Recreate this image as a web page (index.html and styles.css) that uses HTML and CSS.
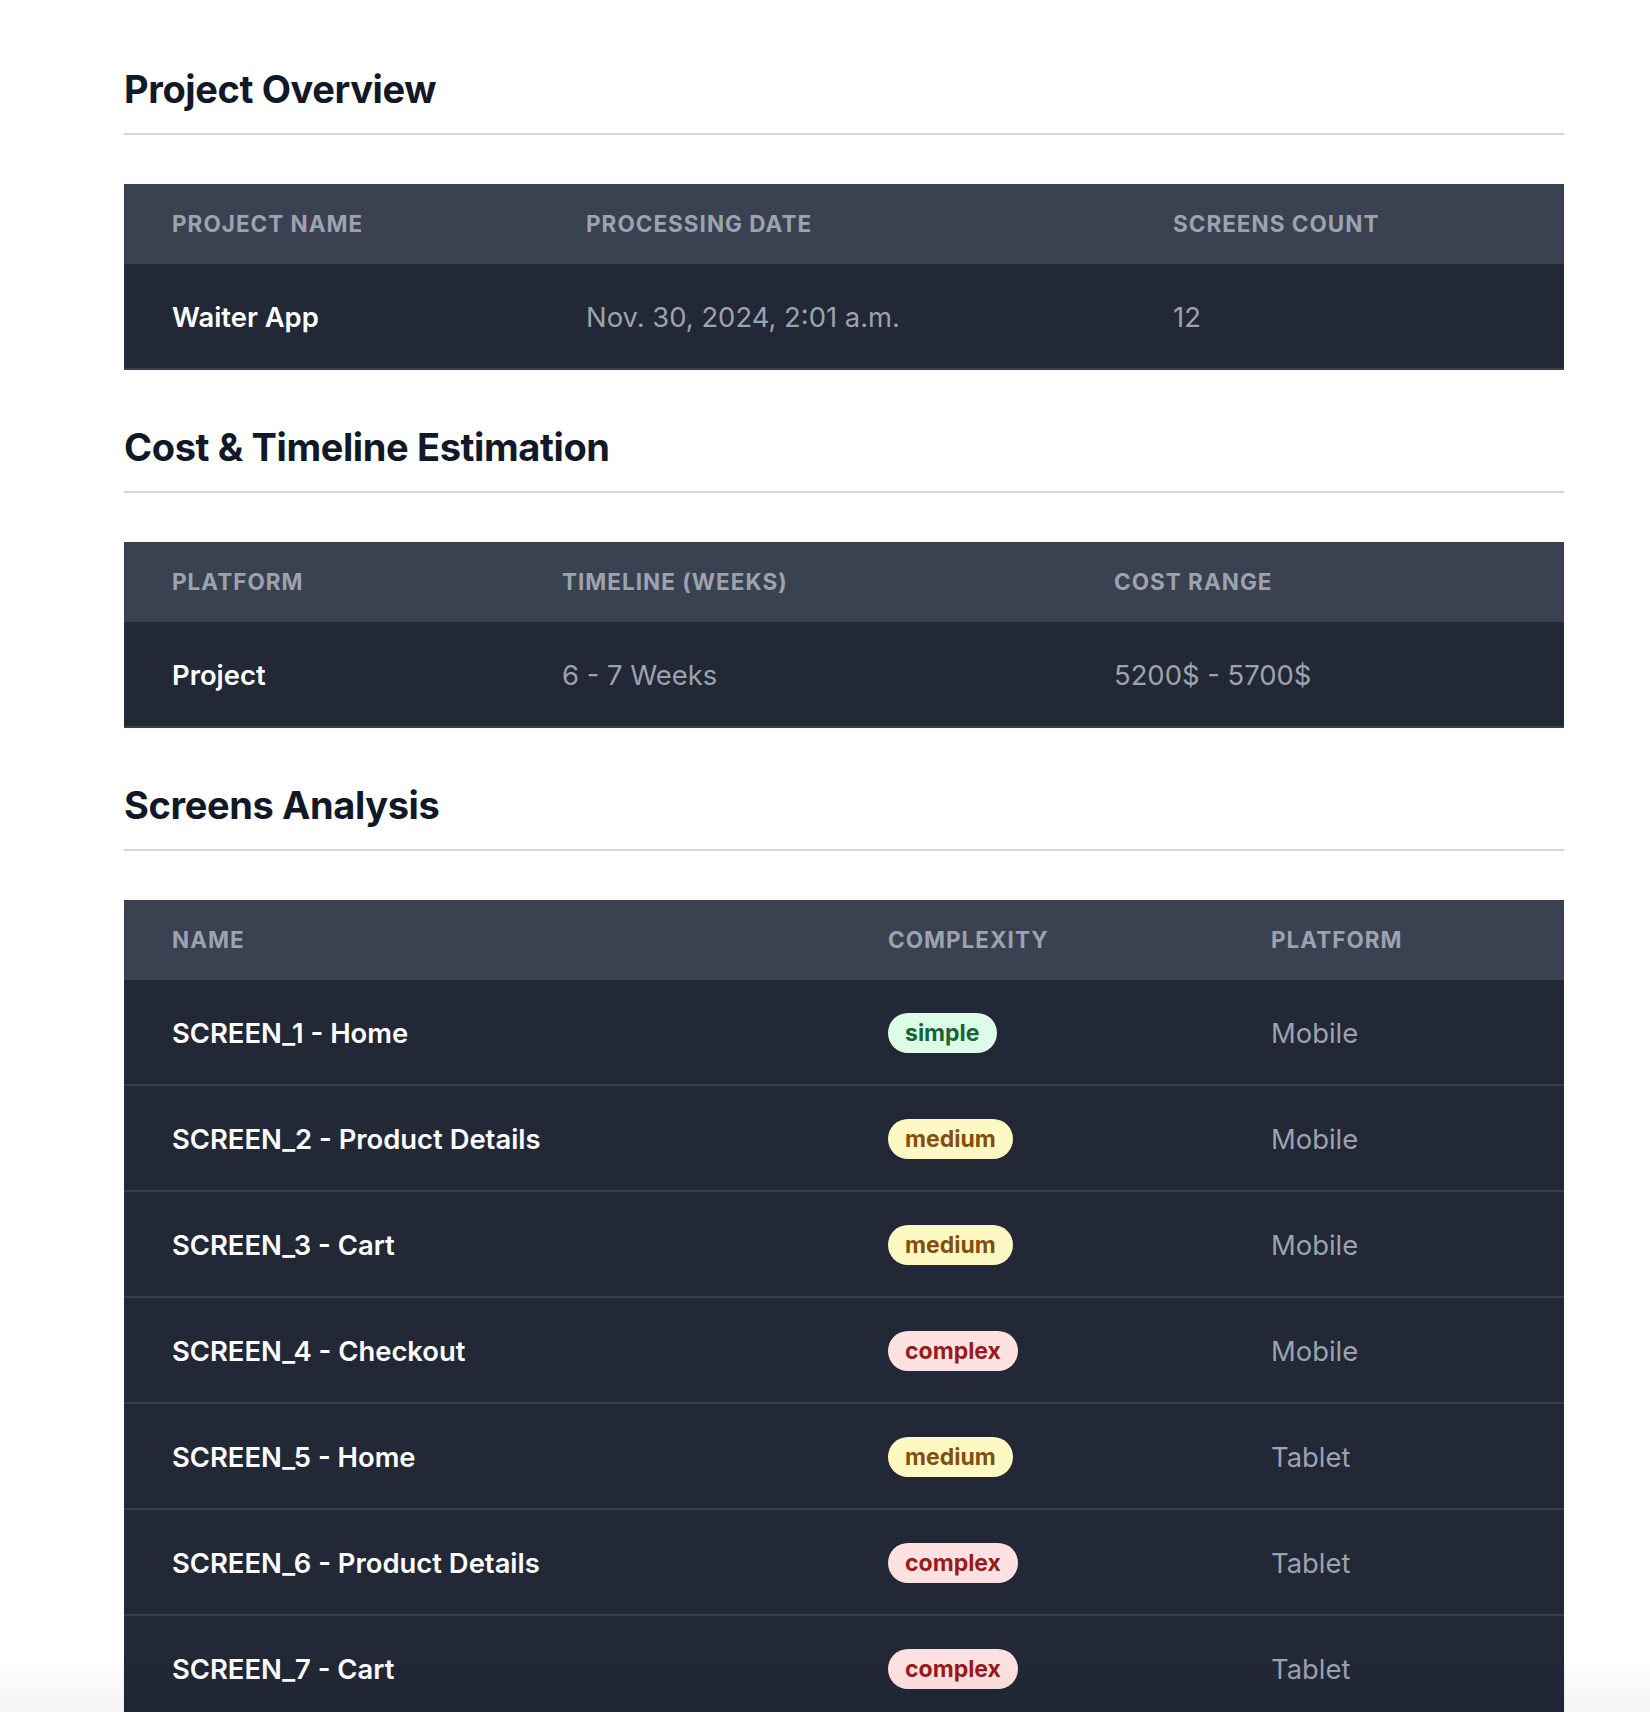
FILE: index.html
```html
<!DOCTYPE html>
<html lang="en">
<head>
<meta charset="utf-8">
<title>Project Report</title>
<link rel="stylesheet" href="styles.css">
</head>
<body>
<main class="page">
  <section class="section">
    <h2 class="section-title">Project Overview</h2>
    <table class="data-table t-overview">
      <colgroup><col class="c1"><col class="c2"><col class="c3"></colgroup>
      <thead><tr><th>Project Name</th><th>Processing Date</th><th>Screens Count</th></tr></thead>
      <tbody><tr><td class="primary">Waiter App</td><td>Nov. 30, 2024, 2:01 a.m.</td><td>12</td></tr></tbody>
    </table>
  </section>

  <section class="section">
    <h2 class="section-title">Cost &amp; Timeline Estimation</h2>
    <table class="data-table t-cost">
      <colgroup><col class="c1"><col class="c2"><col class="c3"></colgroup>
      <thead><tr><th>Platform</th><th>Timeline (Weeks)</th><th>Cost Range</th></tr></thead>
      <tbody><tr><td class="primary">Project</td><td>6 - 7 Weeks</td><td>5200$ - 5700$</td></tr></tbody>
    </table>
  </section>

  <section class="section">
    <h2 class="section-title">Screens Analysis</h2>
    <table class="data-table t-screens">
      <colgroup><col class="c1"><col class="c2"><col class="c3"></colgroup>
      <thead><tr><th>Name</th><th>Complexity</th><th>Platform</th></tr></thead>
      <tbody>
        <tr><td class="primary">SCREEN_1 - Home</td><td><span class="badge simple">simple</span></td><td>Mobile</td></tr>
        <tr><td class="primary">SCREEN_2 - Product Details</td><td><span class="badge medium">medium</span></td><td>Mobile</td></tr>
        <tr><td class="primary">SCREEN_3 - Cart</td><td><span class="badge medium">medium</span></td><td>Mobile</td></tr>
        <tr><td class="primary">SCREEN_4 - Checkout</td><td><span class="badge complex">complex</span></td><td>Mobile</td></tr>
        <tr><td class="primary">SCREEN_5 - Home</td><td><span class="badge medium">medium</span></td><td>Tablet</td></tr>
        <tr><td class="primary">SCREEN_6 - Product Details</td><td><span class="badge complex">complex</span></td><td>Tablet</td></tr>
        <tr><td class="primary">SCREEN_7 - Cart</td><td><span class="badge complex">complex</span></td><td>Tablet</td></tr>
        <tr><td class="primary">SCREEN_8 - Checkout</td><td><span class="badge complex">complex</span></td><td>Tablet</td></tr>
        <tr><td class="primary">SCREEN_9 - Home</td><td><span class="badge medium">medium</span></td><td>Desktop</td></tr>
        <tr><td class="primary">SCREEN_10 - Product Details</td><td><span class="badge complex">complex</span></td><td>Desktop</td></tr>
        <tr><td class="primary">SCREEN_11 - Cart</td><td><span class="badge medium">medium</span></td><td>Desktop</td></tr>
        <tr><td class="primary">SCREEN_12 - Checkout</td><td><span class="badge complex">complex</span></td><td>Desktop</td></tr>
      </tbody>
    </table>
  </section>
</main>
<div class="bottom-fade"></div>
</body>
</html>
```

FILE: styles.css
```css
html, body {
  margin: 0;
  padding: 0;
  background: #ffffff;
}

body {
  font-family: Inter, "Noto Sans", "Liberation Sans", sans-serif;
  color: #111827;
}

.page {
  width: 1440px;
  margin-left: 124px;
  padding-top: 65px;
  padding-bottom: 80px;
}

.section-title {
  margin: 0 0 49px;
  padding-bottom: 20px;
  border-bottom: 2px solid #d4d7dc;
  font-size: 38px;
  line-height: 48px;
  font-weight: 700;
  letter-spacing: -0.01em;
  color: #111827;
}

.data-table {
  width: 100%;
  border-collapse: collapse;
  table-layout: fixed;
  margin-bottom: 53px;
  box-shadow: 0 0 2px rgba(0, 0, 0, 0.08);
}

.t-overview .c1 { width: 414px; }
.t-overview .c2 { width: 587px; }
.t-overview .c3 { width: 439px; }

.t-cost .c1 { width: 390px; }
.t-cost .c2 { width: 552px; }
.t-cost .c3 { width: 498px; }

.t-screens .c1 { width: 716px; }
.t-screens .c2 { width: 383px; }
.t-screens .c3 { width: 341px; }

.data-table th {
  background: #3a4151;
  color: #9ca3af;
  text-align: left;
  text-transform: uppercase;
  font-size: 22.5px;
  line-height: 24px;
  font-weight: 700;
  letter-spacing: 0.045em;
  padding: 28px 0 28px 48px;
}

.data-table td {
  background: #222836;
  color: #9ca3af;
  font-size: 27.4px;
  line-height: 40px;
  font-weight: 400;
  padding: 33px 0 31px 48px;
  border-bottom: 2px solid #3a4151;
  white-space: nowrap;
}

.data-table td.primary {
  color: #ffffff;
  font-weight: 600;
}

.badge {
  display: inline-block;
  vertical-align: top;
  padding: 8px 17px;
  border-radius: 999px;
  font-size: 23px;
  line-height: 24px;
  font-weight: 700;
}

.badge.simple { background: #dcfce7; color: #166534; }
.badge.medium { background: #fef9c3; color: #854d0e; }
.badge.complex { background: #fee2e2; color: #991b1b; }

.bottom-fade {
  position: fixed;
  left: 0;
  right: 0;
  bottom: 0;
  height: 54px;
  background: linear-gradient(to bottom, rgba(0, 0, 0, 0), rgba(0, 0, 0, 0.045));
  pointer-events: none;
}
```
